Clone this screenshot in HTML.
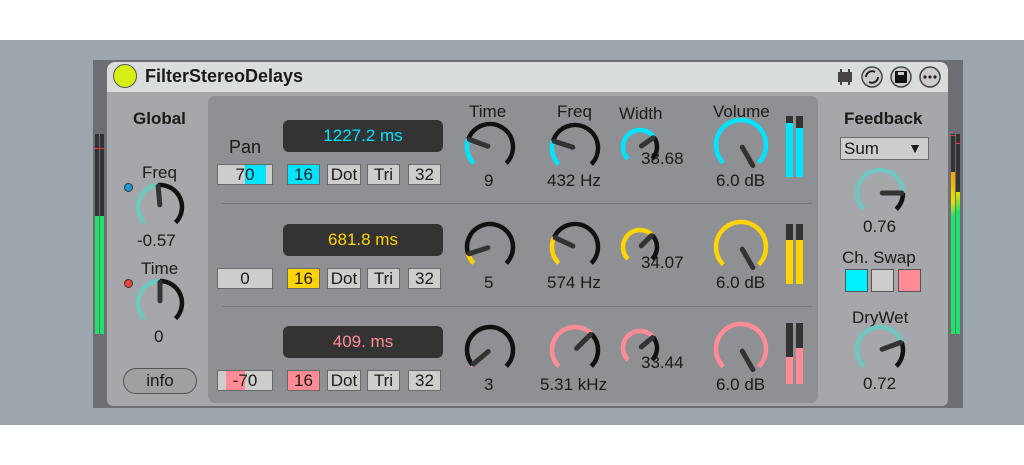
<!DOCTYPE html>
<html><head><meta charset="utf-8"><style>
*{margin:0;padding:0;box-sizing:border-box}
body{width:1024px;height:465px;background:#fff;position:relative;overflow:hidden;font-family:"Liberation Sans",sans-serif;color:#1a1a1a}
.a{position:absolute}
.t{position:absolute;text-align:center;font-size:16px;white-space:nowrap}
.btn{position:absolute;height:21px;background:#cdcdcd;border:1px solid #6a6a6a;font-size:17px;text-align:center;line-height:19px}
.disp{position:absolute;left:283px;width:160px;height:32px;background:#333;border-radius:6px;font-size:17px;text-align:center;line-height:32px}
</style></head><body>
<div class="a" style="left:0;top:40px;width:1024px;height:385px;background:#9da6ad"></div>
<div class="a" style="left:93px;top:60px;width:870px;height:348px;background:#6c6e74"></div>
<div class="a" style="left:107px;top:62px;width:841px;height:344px;background:#a6a7aa;border-radius:8px 8px 6px 6px"></div>
<div class="a" style="left:107px;top:62px;width:841px;height:30px;background:#dadddd;border-radius:8px 8px 0 0"></div>
<div class="a" style="left:113px;top:64px;width:24px;height:24px;border-radius:50%;background:#d4f014;border:1.5px solid #555"></div>
<div class="t" style="left:145px;top:66px;font-size:18px;font-weight:bold;text-align:left">FilterStereoDelays</div>
<svg class="a" style="left:835px;top:64px" width="110" height="26">
<rect x="3" y="8" width="14" height="10" fill="#444"/><rect x="5" y="5" width="2" height="4" fill="#444"/><rect x="13" y="5" width="2" height="4" fill="#444"/><rect x="5" y="18" width="2" height="3" fill="#444"/><rect x="13" y="18" width="2" height="3" fill="#444"/>
<circle cx="37" cy="13" r="10" fill="#ccc" stroke="#444" stroke-width="1.5"/><path d="M31 13a6 6 0 0 1 9-5M43 13a6 6 0 0 1-9 5" stroke="#222" stroke-width="2" fill="none"/>
<circle cx="66" cy="13" r="10" fill="#ccc" stroke="#444" stroke-width="1.5"/><rect x="60" y="7" width="12" height="12" rx="1" fill="#111"/><rect x="63" y="8" width="6" height="3" fill="#ccc"/>
<circle cx="95" cy="13" r="10" fill="#ccc" stroke="#444" stroke-width="1.5"/><circle cx="90" cy="13" r="1.6" fill="#222"/><circle cx="95" cy="13" r="1.6" fill="#222"/><circle cx="100" cy="13" r="1.6" fill="#222"/>
</svg>
<div class="a" style="left:95px;top:134px;width:4px;height:200px;background:#333"></div>
<div class="a" style="left:100px;top:134px;width:4px;height:200px;background:#333"></div>
<div class="a" style="left:95px;top:216px;width:4px;height:118px;background:#1de36a"></div>
<div class="a" style="left:100px;top:216px;width:4px;height:118px;background:#1de36a"></div>
<div class="a" style="left:95px;top:148px;width:9px;height:1px;background:#f33"></div>
<div class="a" style="left:951px;top:134px;width:4px;height:200px;background:#333"></div>
<div class="a" style="left:956px;top:134px;width:4px;height:200px;background:#333"></div>
<div class="a" style="left:951px;top:172px;width:4px;height:162px;background:linear-gradient(#f4a000,#e8e000 30px,#1de36a 45px)"></div>
<div class="a" style="left:956px;top:192px;width:4px;height:142px;background:linear-gradient(#e8e000,#1de36a 20px)"></div>
<div class="a" style="left:951px;top:135px;width:4px;height:1px;background:#f33"></div>
<div class="a" style="left:956px;top:143px;width:4px;height:1px;background:#f33"></div>
<div class="a" style="left:208px;top:96px;width:610px;height:307px;background:#8f9093;border-radius:7px"></div>
<div class="a" style="left:222px;top:203px;width:590px;height:1px;background:#777"></div>
<div class="a" style="left:222px;top:306px;width:590px;height:1px;background:#777"></div>
<div class="t" style="left:133px;top:109px;font-weight:bold;font-size:17px">Global</div>
<div class="t" style="left:142px;top:163px;font-size:17px">Freq</div>
<div class="a" style="left:124px;top:183px;width:9px;height:9px;border-radius:50%;background:#1a9ed8;border:1px solid #333"></div>
<div class="t" style="left:137px;top:231px;font-size:17px">-0.57</div>
<div class="t" style="left:141px;top:259px;font-size:17px">Time</div>
<div class="a" style="left:124px;top:279px;width:9px;height:9px;border-radius:50%;background:#f0413c;border:1px solid #333"></div>
<div class="t" style="left:154px;top:327px;font-size:17px">0</div>
<div class="a" style="left:123px;top:368px;width:74px;height:26px;border-radius:13px;background:#a0a0a2;border:1px solid #555;font-size:17px;text-align:center;line-height:24px">info</div>
<div class="t" style="left:229px;top:137px;font-size:18px">Pan</div>
<div class="btn" style="left:217px;top:164px;width:56px;background:linear-gradient(90deg,#cdcdcd 27px,#00e5ff 27px,#00e5ff 48px,#cdcdcd 48px)">70</div>
<div class="btn" style="left:217px;top:268px;width:56px">0</div>
<div class="btn" style="left:217px;top:370px;width:56px;background:linear-gradient(90deg,#cdcdcd 8px,#ff8c94 8px,#ff8c94 27px,#cdcdcd 27px)">-70</div>
<div class="disp" style="top:120px;color:#00e5ff">1227.2 ms</div>
<div class="disp" style="top:224px;color:#ffd400">681.8 ms</div>
<div class="disp" style="top:326px;color:#ff8c94">409. ms</div>
<div id="btns"></div>
<div class="t" style="left:469px;top:102px;font-size:17px">Time</div>
<div class="t" style="left:557px;top:102px;font-size:17px">Freq</div>
<div class="t" style="left:619px;top:104px;font-size:17px">Width</div>
<div class="t" style="left:713px;top:102px;font-size:17px">Volume</div>
<div class="t" style="left:484px;top:171px;font-size:17px">9</div>
<div class="t" style="left:547px;top:171px;font-size:17px">432 Hz</div>
<div class="t" style="left:641px;top:149px;font-size:17px">38.68</div>
<div class="t" style="left:716px;top:171px;font-size:17px">6.0 dB</div>
<div class="t" style="left:484px;top:273px;font-size:17px">5</div>
<div class="t" style="left:547px;top:273px;font-size:17px">574 Hz</div>
<div class="t" style="left:641px;top:253px;font-size:17px">34.07</div>
<div class="t" style="left:716px;top:273px;font-size:17px">6.0 dB</div>
<div class="t" style="left:484px;top:375px;font-size:17px">3</div>
<div class="t" style="left:540px;top:375px;font-size:17px">5.31 kHz</div>
<div class="t" style="left:641px;top:353px;font-size:17px">33.44</div>
<div class="t" style="left:716px;top:375px;font-size:17px">6.0 dB</div>
<div class="a" style="left:786px;top:116px;width:7px;height:61px;background:#333"></div><div class="a" style="left:796px;top:116px;width:7px;height:61px;background:#333"></div>
<div class="a" style="left:786px;top:123px;width:7px;height:54px;background:#00e5ff"></div><div class="a" style="left:796px;top:128px;width:7px;height:49px;background:#00e5ff"></div>
<div class="a" style="left:786px;top:224px;width:7px;height:60px;background:#333"></div><div class="a" style="left:796px;top:224px;width:7px;height:60px;background:#333"></div>
<div class="a" style="left:786px;top:240px;width:7px;height:44px;background:#ffd400"></div><div class="a" style="left:796px;top:240px;width:7px;height:44px;background:#ffd400"></div>
<div class="a" style="left:786px;top:323px;width:7px;height:61px;background:#333"></div><div class="a" style="left:796px;top:323px;width:7px;height:61px;background:#333"></div>
<div class="a" style="left:786px;top:357px;width:7px;height:27px;background:#ff8c94"></div><div class="a" style="left:796px;top:348px;width:7px;height:36px;background:#ff8c94"></div>
<div class="t" style="left:844px;top:109px;font-weight:bold;font-size:17px">Feedback</div>
<div class="a" style="left:840px;top:137px;width:89px;height:23px;background:#cdcdcd;border:1px solid #6a6a6a;font-size:17px;line-height:21px;padding-left:3px">Sum<span style="position:absolute;right:6px;top:0;font-size:14px">▼</span></div>
<div class="t" style="left:863px;top:217px;font-size:17px">0.76</div>
<div class="t" style="left:842px;top:248px;font-size:17px">Ch. Swap</div>
<div class="a" style="left:845px;top:269px;width:23px;height:23px;background:#00f0ff;border:1px solid #555"></div>
<div class="a" style="left:871px;top:269px;width:23px;height:23px;background:#cdcdcd;border:1px solid #555"></div>
<div class="a" style="left:898px;top:269px;width:23px;height:23px;background:#ff8c94;border:1px solid #555"></div>
<div class="t" style="left:852px;top:308px;font-size:17px">DryWet</div>
<div class="t" style="left:863px;top:374px;font-size:17px">0.72</div>
<svg id="k" class="a" style="left:0;top:0" width="1024" height="465"></svg>
<script>
var b=document.getElementById('btns'),rows=[[164,'#00e5ff'],[268,'#ffd400'],[370,'#ff8c94']],h='';
rows.forEach(function(r){[[287,33,'16'],[327,34,'Dot'],[367,33,'Tri'],[408,33,'32']].forEach(function(x,i){h+='<div class="btn" style="left:'+x[0]+'px;top:'+r[0]+'px;width:'+x[1]+'px;'+(i==0?'background:'+r[1]:'')+'">'+x[2]+'</div>'})});
b.innerHTML=h;
function P(cx,cy,r,a){a=(a-90)*Math.PI/180;return [cx+r*Math.cos(a),cy+r*Math.sin(a)]}
function arc(cx,cy,r,a1,a2,c,w){if(a2-a1<0.5)return '';var p=P(cx,cy,r,a1),q=P(cx,cy,r,a2);return '<path d="M'+p[0]+' '+p[1]+'A'+r+' '+r+' 0 '+(a2-a1>180?1:0)+' 1 '+q[0]+' '+q[1]+'" stroke="'+c+'" stroke-width="'+w+'" fill="none"/>'}
function knob(cx,cy,r,v,c,w){w=w||4.5;var s=arc(cx,cy,r,-135,Math.min(v,135),c,w)+arc(cx,cy,r,Math.min(v,135),135,'#111',w);var p=P(cx,cy,r*0.95,v),q=P(cx,cy,r*0.1,v);s+='<line x1="'+q[0]+'" y1="'+q[1]+'" x2="'+p[0]+'" y2="'+p[1]+'" stroke="#333" stroke-width="5" stroke-linecap="round"/>';return s}
var T='#6cc8c0',C='#00e5ff',Y='#ffd400',K='#ff8c94',s='';
s+=knob(160,207,22,-5,T)+knob(160,303,22,0,T);
s+=knob(490,147,23,-70,C)+knob(575,148,23,-72,C)+knob(640,147,17,55,C)+knob(741,145,25,150,C);
s+=knob(490,247,23,-108,Y)+knob(575,247,23,-65,Y)+knob(640,247,17,45,Y)+knob(741,247,25,150,Y);
s+=knob(490,350,23,-130,K)+knob(575,350,23,45,K)+knob(640,348,17,50,K)+knob(741,349,25,150,K);
s+=knob(880,193,23,90,T)+knob(880,350,23,70,T);
document.getElementById('k').innerHTML=s;
</script>
</body></html>
